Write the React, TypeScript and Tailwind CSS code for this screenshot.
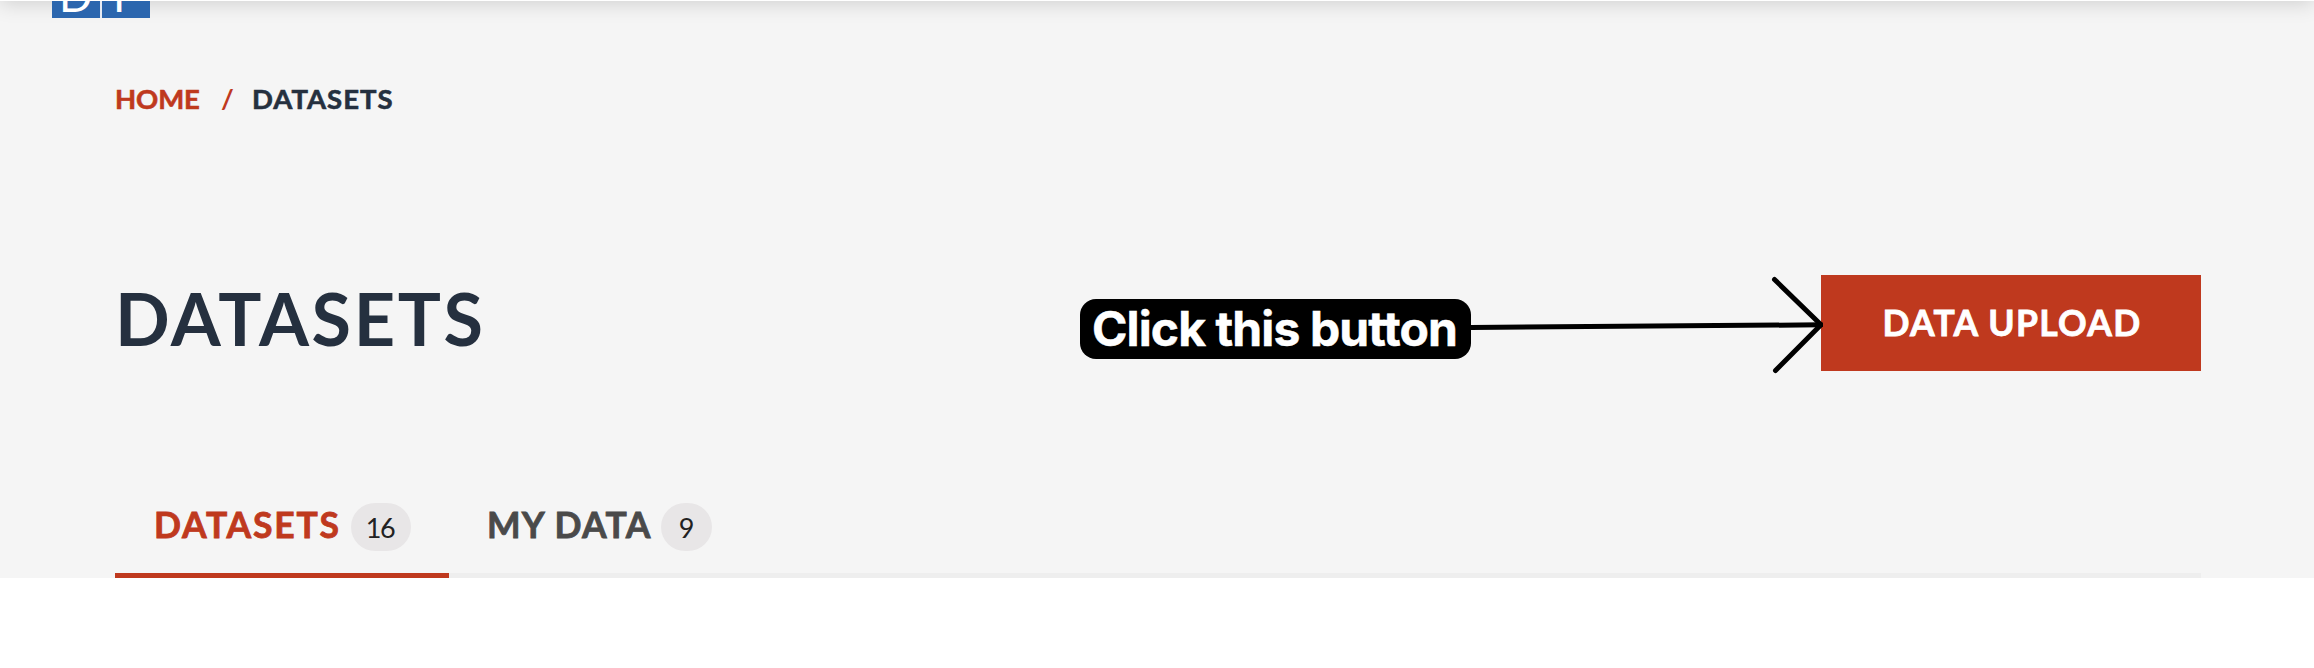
const tabs = [
  {
    label: "DATASETS",
    count: 16,
    tab: "w-[334px] pl-[39px] border-[#bf391e] text-[#bf391e]",
    labelStyle: "w-[186px] tracking-[1.8px]",
    badge: "ml-[11px] w-[60px] pr-0.5 tracking-[-1.5px]",
  },
  {
    label: "MY DATA",
    count: 9,
    tab: "w-[302px] pl-[38px] border-transparent text-[#4a4a4a]",
    labelStyle: "w-[164px] tracking-[1.3px]",
    badge: "ml-[10px] w-[51px]",
  },
];

function LogoTile({ letter, inset }: { letter: string; inset: string }) {
  return (
    <div className={`flex h-[17px] w-12 items-end overflow-hidden bg-[#2b66ae] text-[44px] leading-none text-white ${inset}`}>
      <span className="mb-px block">{letter}</span>
    </div>
  );
}

function Pointer() {
  return (
    <svg
      width="352"
      height="100"
      viewBox="0 0 352 100"
      fill="none"
      stroke="#000"
      strokeWidth="5"
      strokeLinecap="round"
      strokeLinejoin="round"
      className="relative z-10 -mr-0.5 shrink-0"
    >
      <path d="M0 52.5 L350 49.8" />
      <path d="M303.5 4.5 L350 49.8 L304.5 95.5" />
    </svg>
  );
}

export default function App() {
  return (
    <div className="flow-root h-[668px] w-[2314px] overflow-hidden bg-white font-['Lato',sans-serif]">
      <div className="-mt-20 flex h-[658px] flex-col bg-[#f5f5f5]">
        <div className="h-[81px] shrink-0 bg-white shadow-[0_2px_20px_rgba(0,0,0,0.16)]" />
        <div className="relative flex h-[23px] shrink-0 items-start pl-[52px]">
          <div className="flex gap-[2px] bg-[#e6eaf2]">
            <LogoTile letter="D" inset="pl-[7px]" />
            <LogoTile letter="P" inset="pl-[11px]" />
          </div>
        </div>

        <nav className="flex h-[152px] shrink-0 items-start pl-[115px] pt-[57px] text-[27.5px] font-bold leading-9">
          <a className="w-[106px] tracking-[-0.1px] text-[#bf391e] [-webkit-text-stroke:0.6px_currentColor]">HOME</a>
          <span className="w-[31px] text-[#bf391e]">/</span>
          <span className="tracking-[1px] text-[#25303f] [-webkit-text-stroke:0.6px_currentColor]">DATASETS</span>
        </nav>

        <div className="flex h-[295px] shrink-0 items-start pl-[115px] pt-[99px]">
          <h1 className="w-[965px] pt-[3px] text-[72px] font-bold leading-[80px] tracking-[2.6px] text-[#25303f]">
            DATASETS
          </h1>
          <div className="mt-[24px] flex h-[60px] w-[391px] shrink-0 items-center rounded-[16px] bg-black pl-3 font-['Inter',sans-serif] text-[48px] font-bold tracking-[-0.9px] text-white">
            <span className="whitespace-nowrap [-webkit-text-stroke:0.5px_currentColor]">Click this button</span>
          </div>
          <Pointer />
          <button className="flex h-24 w-[380px] shrink-0 items-center justify-center whitespace-nowrap bg-[#bf391e] pl-0.5 text-[35.5px] font-bold tracking-[1.3px] text-white [-webkit-text-stroke:0.8px_currentColor]">
            DATA UPLOAD
          </button>
        </div>

        <div className="ml-[115px] flex h-[107px] w-[2086px] shrink-0 items-end shadow-[inset_0_-5px_0_#eeeeee]">
          {tabs.map((t) => (
            <div key={t.label} className={`flex h-[75px] items-start border-b-[5px] ${t.tab}`}>
              <span
                className={`whitespace-nowrap text-[35.5px] font-bold leading-[44px] [-webkit-text-stroke:0.8px_currentColor] ${t.labelStyle}`}
              >
                {t.label}
              </span>
              <span className={`flex h-12 items-center justify-center rounded-full bg-[#e8e6e7] pt-[3px] text-[27px] text-[#222] ${t.badge}`}>
                {t.count}
              </span>
            </div>
          ))}
        </div>
      </div>
    </div>
  );
}
